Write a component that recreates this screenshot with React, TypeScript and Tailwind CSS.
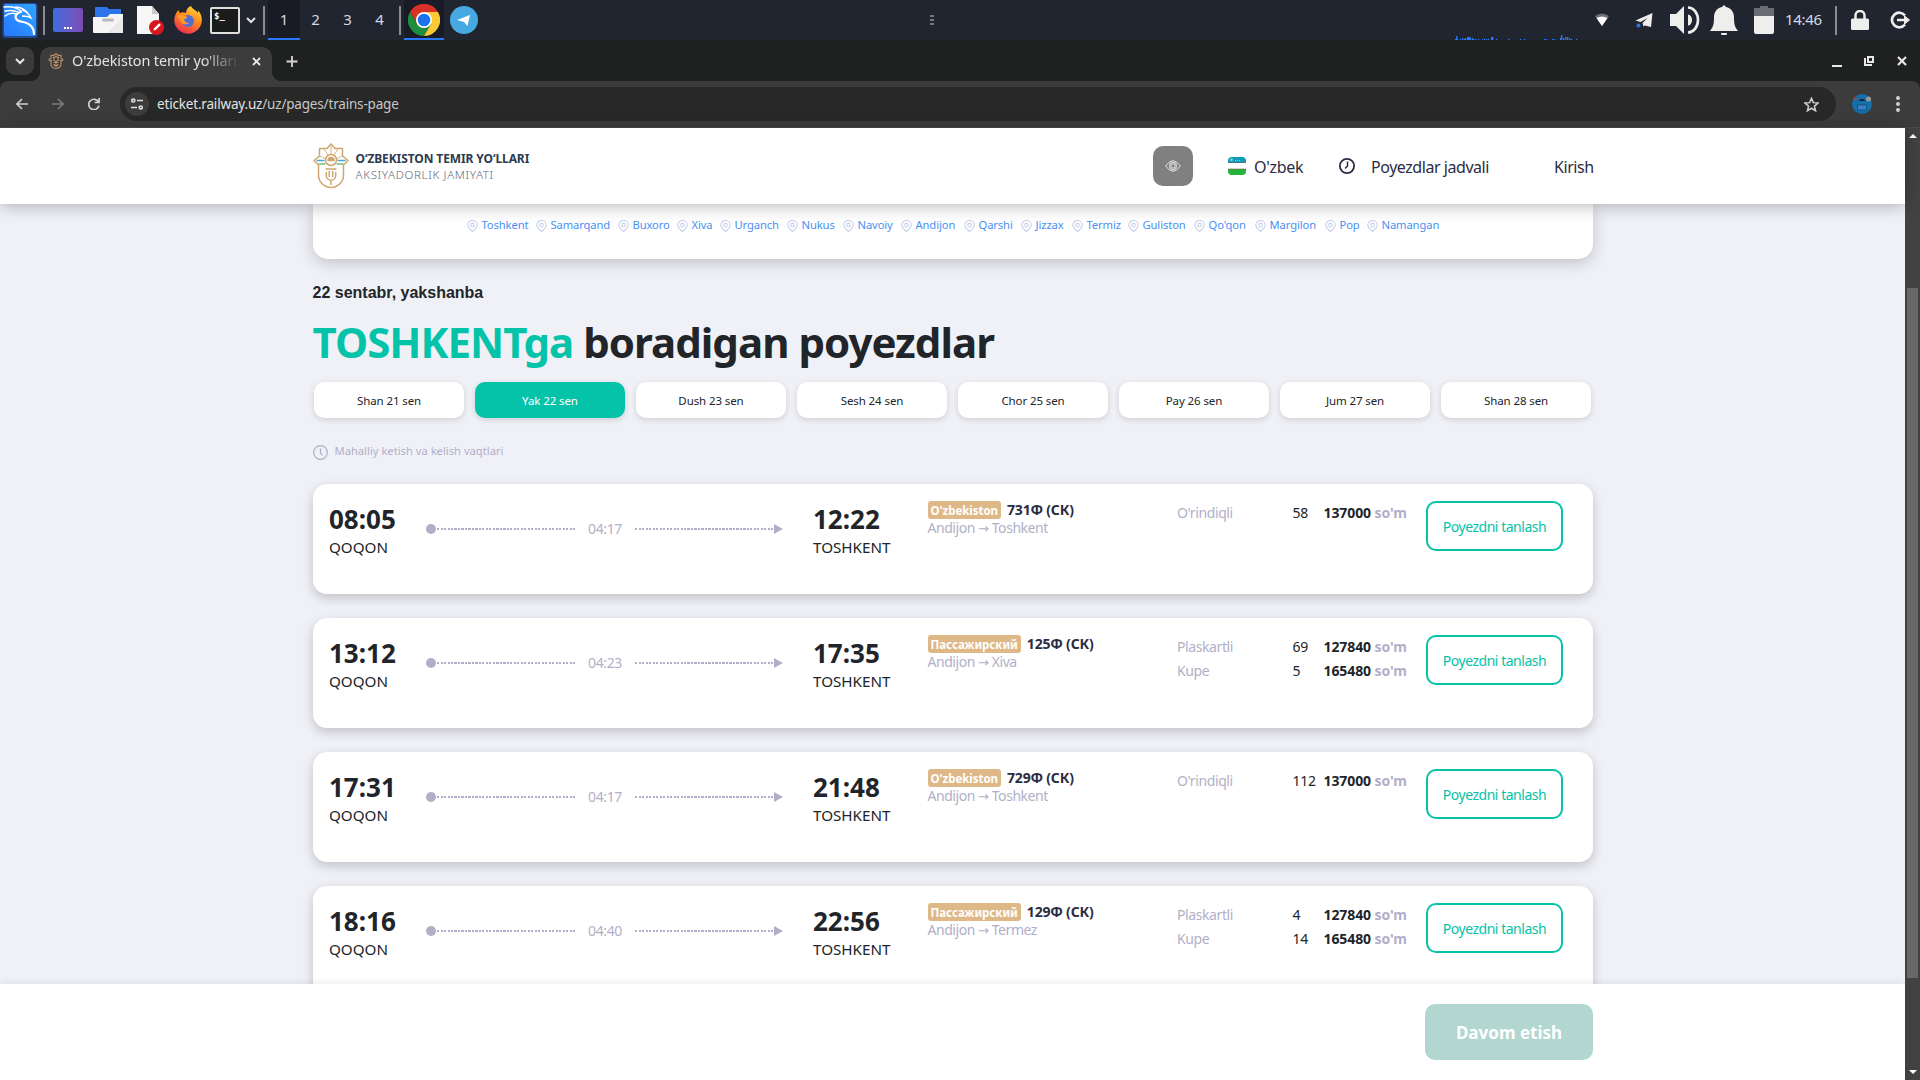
import React from 'react';

const CITIES = [
  { name: 'Toshkent', w: 'w-[69px]' },
  { name: 'Samarqand', w: 'w-[82px]' },
  { name: 'Buxoro', w: 'w-[59px]' },
  { name: 'Xiva', w: 'w-[43px]' },
  { name: 'Urganch', w: 'w-[67px]' },
  { name: 'Nukus', w: 'w-[56px]' },
  { name: 'Navoiy', w: 'w-[58px]' },
  { name: 'Andijon', w: 'w-[63px]' },
  { name: 'Qarshi', w: 'w-[57px]' },
  { name: 'Jizzax', w: 'w-[51px]' },
  { name: 'Termiz', w: 'w-[56px]' },
  { name: 'Guliston', w: 'w-[66px]' },
  { name: "Qo'qon", w: 'w-[61px]' },
  { name: 'Margilon', w: 'w-[70px]' },
  { name: 'Pop', w: 'w-[42px]' },
  { name: 'Namangan', w: 'w-[74px]' },
];

const DATES = ['Shan 21 sen', 'Yak 22 sen', 'Dush 23 sen', 'Sesh 24 sen', 'Chor 25 sen', 'Pay 26 sen', 'Jum 27 sen', 'Shan 28 sen'];

type Seat = { type: string; count: number; price: string };
type Train = { dep: string; dur: string; arr: string; brand: string; no: string; to: string; seats: Seat[] };

const TRAINS: Train[] = [
  { dep: '08:05', dur: '04:17', arr: '12:22', brand: "O'zbekiston", no: '731Ф (СК)', to: 'Toshkent', seats: [{ type: "O'rindiqli", count: 58, price: '137000' }] },
  { dep: '13:12', dur: '04:23', arr: '17:35', brand: 'Пассажирский', no: '125Ф (СК)', to: 'Xiva', seats: [{ type: 'Plaskartli', count: 69, price: '127840' }, { type: 'Kupe', count: 5, price: '165480' }] },
  { dep: '17:31', dur: '04:17', arr: '21:48', brand: "O'zbekiston", no: '729Ф (СК)', to: 'Toshkent', seats: [{ type: "O'rindiqli", count: 112, price: '137000' }] },
  { dep: '18:16', dur: '04:40', arr: '22:56', brand: 'Пассажирский', no: '129Ф (СК)', to: 'Termez', seats: [{ type: 'Plaskartli', count: 4, price: '127840' }, { type: 'Kupe', count: 14, price: '165480' }] },
];

const SPIKES = [
  [0, 1], [1, 4], [2, 1], [5, 1], [7, 2], [9, 1], [10, 2], [12, 3], [13, 3], [14, 3], [15, 2], [17, 2], [18, 1], [20, 1], [23, 1], [27, 1], [29, 1], [31, 1], [33, 1], [36, 3], [37, 3], [41, 1],
  [53, 1], [65, 1], [69, 1], [89, 1], [91, 1], [97, 1], [99, 1], [105, 2], [106, 5], [108, 2], [110, 3], [112, 3], [114, 2], [116, 1], [121, 1],
];

function KaliIcon() {
  return (
    <svg className="ml-[2px] size-9 shrink-0" viewBox="0 0 36 36" fill="none">
      <defs>
        <linearGradient id="kali" x1="0" y1="1" x2="1" y2="0">
          <stop offset="0" stopColor="#2777ff" />
          <stop offset="1" stopColor="#2fa4ff" />
        </linearGradient>
      </defs>
      <rect x="0.5" y="1" width="35" height="35" rx="3" fill="#2468d8" opacity=".55" />
      <rect x="2" y="2" width="32" height="32" rx="2" fill="url(#kali)" />
      <path d="M2 5c7-1 12 0 17 4M3 9c5-1 9-1 13 1M3 14c4-3 8-3 11-2" stroke="#fff" strokeWidth="1.500" strokeLinecap="round" />
      <path d="M13 5c6 0 11 3 14 8M20 8c4 1 7 4 9 8-3-2-6-2-9-2" stroke="#fff" strokeWidth="1.300" />
      <path d="M19 10c-5 1-7 5-4 8 4 3 10 1 14 6 2 2 3 5 3 8" stroke="#fff" strokeWidth="2.200" strokeLinecap="round" />
    </svg>
  );
}

function Chrome() {
  return (
    <svg className="size-8" viewBox="0 0 32 32">
      <path d="M2.100 8A16 16 0 0 1 29.900 8H16L9 20z" fill="#d93025" />
      <path d="M2.100 8A16 16 0 0 0 16 32l7-12H9z" fill="#1e8e3e" />
      <path d="M29.900 8A16 16 0 0 1 16 32l7-12-7-12z" fill="#fcc934" />
      <circle cx="16" cy="16" r="8" fill="#fff" />
      <circle cx="16" cy="16" r="6.300" fill="#1a73e8" />
    </svg>
  );
}

function Firefox() {
  return (
    <svg className="size-7" viewBox="0 0 28 28">
      <defs>
        <linearGradient id="fx" x1=".8" y1="0" x2=".3" y2="1">
          <stop offset="0" stopColor="#ffdf3a" />
          <stop offset=".45" stopColor="#ff8a1f" />
          <stop offset="1" stopColor="#ef2d4e" />
        </linearGradient>
      </defs>
      <path d="M17 0c1 3 5 4 7 7 0-1 0-2-.3-3C27 7 28 11 27.800 15A13.800 13.800 0 0 1 .3 15C.2 10 2 6 5 4c0 2 0 2 1 3 2-1 4-1 6 0 0-3 2-6 5-7z" fill="url(#fx)" />
      <circle cx="14" cy="15" r="6" fill="#4f6fd8" />
      <path d="M3 10c4-2 6 0 9 0 2 1 1 3-2 3 0 2 2 4 5 4-3 3-9 1-9-3z" fill="#ff9a26" />
    </svg>
  );
}

function Emblem({ className, stroke = 1.5 }: { className: string; stroke?: number }) {
  return (
    <svg className={className} viewBox="0 0 36 46" fill="none" stroke="#cfa76b" strokeWidth={stroke} strokeLinejoin="round">
      <path d="M18 1l4 4.500h7.500V13L35 17.500l-4.500 4.500V32a12.500 12.500 0 0 1-25 0V22L1 17.500 6.500 13V5.500H14z" />
      <path d="M18 3v8M11 6l4 6M25 6l-4 6M7 13l5 2.500M29 13l-5 2.500" strokeWidth=".8" />
      <path d="M3.500 17.500h8M24.500 17.500h8" stroke="#4aa3d8" strokeWidth="1.500" />
      <path d="M5.500 21h7M23.500 21h7" stroke="#6fbf73" strokeWidth="1.300" />
      <circle cx="18" cy="17" r="5.500" />
      <path d="M15 17.500a3 3 0 0 1 6 0z" fill="#cfa76b" />
      <path d="M12.500 26h11M13.300 29v3.500a4.700 4.700 0 0 0 9.400 0V29M18 37v5M16.300 28v6M19.700 28v6" />
    </svg>
  );
}

function TabIcon() {
  return (
    <svg className="ml-2 size-4" viewBox="0 0 16 16" fill="none" stroke="#b58a63" strokeWidth="1.200">
      <path d="M8 .7l2 1.600h3v3l2 1.500-2 1.700v2.700a5 4.300 0 0 1-10 0V8.500L1 6.800l2-1.500v-3h3z" />
      <circle cx="8" cy="6" r="2.300" />
      <path d="M5.500 9.500h5M6 11a2 2 0 0 0 4 0M8 10v4M5 4l1 1M11 4l-1 1" />
      <path d="M2.500 7.500h2M11.500 7.500h2" stroke="#7f9c86" />
    </svg>
  );
}

function Divider({ className = '' }: { className?: string }) {
  return <div className={'h-[29px] w-[2px] shrink-0 bg-[#8b8d92] ' + className} />;
}

function DesktopBar() {
  return (
    <div className="relative flex h-10 items-center bg-[#212530] text-[15px] text-[#d3dae3]">
      <KaliIcon />
      <Divider className="ml-[5px]" />
      <div className="ml-2 flex h-6 w-[30px] items-end justify-center gap-[1px] rounded-[2px] bg-linear-to-r from-[#3b6ce0] to-[#7b4bb5] pb-[3px]">
        <i className="size-[2px] bg-white" /><i className="size-[2px] bg-white" /><i className="size-[2px] bg-white" />
      </div>
      <svg className="ml-[10px] h-7 w-[30px]" viewBox="0 0 30 28">
        <path d="M2 2a1 1 0 0 1 1-1h11l2 2h12v9H2z" fill="#2f73e8" />
        <path d="M0 11h14l3-3h13v18a1 1 0 0 1-1 1H1a1 1 0 0 1-1-1z" fill="#f5f5f5" />
        <path d="M14 27L30 11v16z" fill="#e9e9e9" />
        <rect x="9" y="12.500" width="12" height="3" rx="1.500" fill="#b9b9b9" />
      </svg>
      <svg className="ml-[14px] h-[29px] w-7" viewBox="0 0 28 29">
        <path d="M0 0h15l7 8v20H0z" fill="#f6f6f6" />
        <path d="M15 0l7 8h-7z" fill="#c9c9c9" />
        <circle cx="19.500" cy="21.500" r="7.500" fill="#d8171e" />
        <path d="M16.500 24.500l.6-2.300 5-5 1.700 1.700-5 5z" fill="#fff" />
      </svg>
      <div className="ml-[9px]"><Firefox /></div>
      <div className="ml-2 h-[27px] w-[30px] rounded-[2px] border-2 border-[#dfdfdc] bg-[#1a1c1b] pl-[2px] font-['DejaVu_Sans_Mono'] text-[9px] leading-[14px] font-bold text-white">$_</div>
      <svg className="ml-[6px] size-[10px]" viewBox="0 0 10 10" fill="none" stroke="#e0e0e0" strokeWidth="2"><path d="M1 3l4 4 4-4" /></svg>
      <Divider className="ml-[7px]" />
      <div className="ml-[3px] flex h-10 w-8 items-center justify-center border-b-2 border-[#2777ff] bg-[#191c26]">1</div>
      <div className="w-8 pr-px pb-px text-center">2</div>
      <div className="w-8 pr-px pb-px text-center">3</div>
      <div className="w-8 pr-px pb-px text-center">4</div>
      <Divider className="ml-[3px]" />
      <div className="ml-[3px] flex h-10 w-10 items-center justify-center border-b-2 border-[#2777ff] bg-[#191c26] pt-[2px]"><Chrome /></div>
      <svg className="ml-[6px] size-7" viewBox="0 0 28 28"><circle cx="14" cy="14" r="14" fill="#46a9e2" /><path d="M7 14l13-5-2.500 11-3.500-4z" fill="#fff" /></svg>
      <div className="ml-[452px] flex flex-col gap-[2px]">
        <i className="h-[2px] w-1 bg-[#747680]" /><i className="h-[2px] w-1 bg-[#747680]" /><i className="h-[2px] w-1 bg-[#747680]" />
      </div>
      <div className="mr-[8px] ml-auto flex items-center text-[#eeeeec]">
        <svg className="h-[14px] w-4" viewBox="0 0 16 14"><path d="M1 3q7-5 14 0l-7 10z" fill="#6c6e75" /><path d="M2.500 5q5.500-3 11 0L8 13z" fill="#fff" /></svg>
        <svg className="ml-6 h-4 w-5" viewBox="0 0 20 16"><path d="M1.500 8.500L18.500 1 17 15l-6-1.500-1.500 1-1-3.500 5-5-7 4z" fill="#eeeeec" /><circle cx="4.500" cy="13.500" r="2" fill="#2f73e8" /></svg>
        <svg className="ml-4 h-7 w-[30px]" viewBox="0 0 30 28" fill="none">
          <path d="M0 8h6l8-8v28l-8-8H0z" fill="#eeeeec" />
          <path d="M18 8.500a4 5.500 0 0 1 0 11z" fill="#eeeeec" />
          <path d="M18 1.500a10 12.500 0 0 1 0 25" stroke="#eeeeec" strokeWidth="2.600" />
        </svg>
        <svg className="ml-[10px] h-[30px] w-7" viewBox="0 0 28 30" fill="#eeeeec"><path d="M14 0l2 2c5 1 8 5 8 10 0 8 1 10 4 14H0c3-4 4-6 4-14 0-5 3-9 8-10zM11 28h6a3 3 0 0 1-6 0z" /></svg>
        <svg className="ml-4 h-7 w-5" viewBox="0 0 20 28"><path d="M6 0h8v2h6v8H0V2h6z" fill="#6a6c73" /><path d="M0 10h20v16a2 2 0 0 1-2 2H2a2 2 0 0 1-2-2z" fill="#eeeeec" /></svg>
        <span className="ml-[11px] w-[38px] pb-px text-[15px] tracking-[-0.3px] whitespace-nowrap text-[#d3dae3]">14:46</span>
        <Divider className="ml-3" />
        <svg className="ml-[14px] h-5 w-[18px]" viewBox="0 0 18 20"><path d="M4.500 9V5.500a4.500 4.500 0 0 1 9 0V9" fill="none" stroke="#eeeeec" strokeWidth="2.500" /><rect y="8.500" width="18" height="11.500" rx="1.500" fill="#eeeeec" /></svg>
        <svg className="ml-[21px] h-[18px] w-[22px]" viewBox="0 0 22 18" fill="none" stroke="#eeeeec" strokeWidth="2.700"><path d="M15 4.500A7.300 7.300 0 1 0 15 13.500M7 9h9" /><path d="M14.500 5l5 4-5 4z" fill="#eeeeec" strokeWidth="1" /></svg>
      </div>
      <svg className="absolute bottom-0 left-[1455px] h-[5px] w-[124px]" viewBox="0 0 124 5" fill="#2777ff">
        {SPIKES.map(([x, h]) => <rect key={x} x={x} y={5 - h} width="1.300" height={h} />)}
      </svg>
    </div>
  );
}

function TabStrip() {
  return (
    <div className="flex h-[41px] bg-[#1f2120] pt-[7px] text-[#e3e3e3]">
      <div className="ml-[6px] flex size-7 items-center justify-center rounded-[9px] bg-[#3a3b3a]">
        <svg className="size-[10px]" viewBox="0 0 10 10" fill="none" stroke="#e8e8e8" strokeWidth="2"><path d="M1 3l4 4 4-4" /></svg>
      </div>
      <div className="relative ml-[6px] flex h-[34px] w-[232px] items-center rounded-t-[10px] bg-[#3c3c3c] pb-[6px]">
        <i className="absolute bottom-0 -left-[10px] size-[10px] bg-[radial-gradient(circle_at_0_0,transparent_10px,#3c3c3c_10.5px)]" />
        <i className="absolute -right-[10px] bottom-0 size-[10px] bg-[radial-gradient(circle_at_100%_0,transparent_10px,#3c3c3c_10.5px)]" />
        <TabIcon />
        <span className="ml-2 w-[168px] mask-r-from-78% mask-r-to-100% text-[14.4px] leading-5 tracking-[-0.1px] whitespace-nowrap">O'zbekiston temir yo'llari</span>
        <svg className="ml-3 size-[9px]" viewBox="0 0 9 9" stroke="#e8e8e8" strokeWidth="1.800"><path d="M1 1l7 7M8 1L1 8" /></svg>
      </div>
      <svg className="mt-2 ml-[14px] size-3" viewBox="0 0 12 12" stroke="#d5d5d5" strokeWidth="1.800"><path d="M6 1v11M.5 6.500h11" /></svg>
      <div className="mr-[13px] ml-auto flex h-7 items-center">
        <i className="mt-[9px] h-[2px] w-[10px] bg-[#e8e8e8]" />
        <svg className="ml-[22px] size-[10px]" viewBox="0 0 10 10" fill="none" stroke="#e8e8e8" strokeWidth="2"><path d="M4 1h5v5H4zM1 2v7h7" /></svg>
        <svg className="ml-[23px] size-[10px]" viewBox="0 0 10 10" stroke="#e8e8e8" strokeWidth="2.200"><path d="M1 1l8 8M9 1L1 9" /></svg>
      </div>
    </div>
  );
}

function Toolbar() {
  return (
    <div className="bg-[#1f2120]">
      <div className="flex h-[47px] items-center rounded-t-[8px] border-b border-[#4a4a4a] bg-[#3c3c3c]">
        <svg className="ml-4 size-3" viewBox="0 0 12 12" fill="none" stroke="#d0d0d0" strokeWidth="1.700"><path d="M12 6H1M6 1L1 6l5 5" /></svg>
        <svg className="ml-6 size-3" viewBox="0 0 12 12" fill="none" stroke="#7b7b7b" strokeWidth="1.700"><path d="M0 6h11M6 1l5 5-5 5" /></svg>
        <svg className="ml-6 size-3" viewBox="0 0 12 12" fill="none" stroke="#d0d0d0" strokeWidth="1.700"><path d="M10.500 4A5.200 5.200 0 1 0 11 7.500M11.100 0v4.500H6.600" /></svg>
        <div className="ml-5 flex h-[34px] w-[1716px] items-center rounded-full bg-[#282828]">
          <div className="ml-[5px] flex size-6 items-center justify-center rounded-full bg-[#3c3c3c]">
            <svg className="size-3" viewBox="0 0 12 12" fill="none" stroke="#dedede" strokeWidth="1.700"><circle cx="2.300" cy="2.500" r="1.500" /><circle cx="9.700" cy="9.500" r="1.500" /><path d="M6 2.500h6M0 9.500h6" /></svg>
          </div>
          <span className="ml-2 w-[243px] text-[13.5px] tracking-[-0.18px] whitespace-nowrap text-[#c7c7c7]"><span className="text-[#e3e3e3]">eticket.railway.uz</span>/uz/pages/trains-page</span>
          <svg className="mr-[17px] ml-auto size-[15px]" viewBox="0 0 24 24" fill="none" stroke="#d0d0d0" strokeWidth="2.400"><path d="M12 2l2.900 7 7.600.6-5.800 5 1.800 7.400-6.500-4-6.500 4 1.800-7.400-5.800-5 7.600-.6z" /></svg>
        </div>
        <svg className="ml-4 size-5" viewBox="0 0 20 20"><circle cx="10" cy="10" r="10" fill="#156fa8" /><path d="M1 5h6l-5-2z" fill="#b33" /><circle cx="16.500" cy="5" r="2.500" fill="#9a9a94" /><path d="M7 7a3 2 0 0 1 6 0z" fill="#15202a" /><rect x="5.500" y="11" width="9" height="5" fill="#3b82c4" stroke="#0d4f80" strokeWidth=".8" /></svg>
        <div className="ml-6 flex flex-col gap-[2.500px]"><i className="size-[3.500px] rounded-full bg-[#d0d0d0]" /><i className="size-[3.500px] rounded-full bg-[#d0d0d0]" /><i className="size-[3.500px] rounded-full bg-[#d0d0d0]" /></div>
      </div>
    </div>
  );
}

function SiteHeader() {
  return (
    <header className="relative z-10 flex h-[76px] shrink-0 items-center bg-white pl-[312.5px] text-[16px] tracking-[-0.45px] text-[#2c2c44] shadow-[0_2px_16px_rgba(0,0,0,0.28)]">
      <Emblem className="h-[46px] w-9" />
      <div className="ml-[7px] w-[300px] pt-[2px] whitespace-nowrap">
        <div className="text-[12px] leading-4 font-bold tracking-[-0.1px] text-[#2d3a4f]">O‘ZBEKISTON TEMIR YO‘LLARI</div>
        <div className="text-[11.500px] leading-4 font-light tracking-[0.68px] text-[#5d6778]">AKSIYADORLIK JAMIYATI</div>
      </div>
      <div className="ml-[497.5px] flex size-10 items-center justify-center rounded-[10px] bg-[#808080]">
        <svg className="h-3 w-4" viewBox="0 0 16 12" fill="none" stroke="#fff" strokeWidth=".8"><path d="M.6 6Q8-4.500 15.400 6 8 16.500.6 6z" /><rect x="4.500" y="2.500" width="7" height="7" rx="3" /><rect x="6" y="4" width="4" height="4" rx="1" /></svg>
      </div>
      <svg className="ml-[35px] size-[18px]" viewBox="0 0 18 18">
        <clipPath id="flag"><rect width="18" height="18" rx="4" /></clipPath>
        <g clipPath="url(#flag)"><rect width="18" height="6" fill="#0e9bb8" /><rect y="5.500" width="18" height=".6" fill="#8b5660" /><rect y="6" width="18" height="6" fill="#fff" /><rect y="12" width="18" height="6" fill="#22b33a" /><rect y="11.700" width="18" height=".6" fill="#8b5660" /><circle cx="3.500" cy="2.800" r="1.400" fill="#7fd0de" /><path d="M7 3.500h6" stroke="#7fd0de" strokeDasharray="1 1" /></g>
      </svg>
      <span className="ml-2 w-[85px] pt-px tracking-[-0.3px] whitespace-nowrap">O'zbek</span>
      <svg className="size-4" viewBox="0 0 16 16" fill="none" stroke="#2c2c44" strokeWidth="1.800"><circle cx="8" cy="8" r="7.100" /><path d="M8.500 3.500V8l-2.500 2.500" strokeWidth="1.500" /></svg>
      <span className="ml-4 w-[183px] pt-px whitespace-nowrap">Poyezdlar jadvali</span>
      <span className="pt-px">Kirish</span>
    </header>
  );
}

function Pin() {
  return (
    <svg className="h-3 w-[11px] shrink-0" viewBox="0 0 11 12" fill="none" stroke="#c9d0ec" strokeWidth="1.100"><path d="M5.500 11.500C3 9.500.8 7.500.8 5a4.700 4.500 0 0 1 9.400 0c0 2.500-2.200 4.500-4.700 6.500z" /><circle cx="5.500" cy="5.200" r="1.800" /></svg>
  );
}

function TrainCard({ t }: { t: Train }) {
  return (
    <div className="flex h-[110px] w-[1280px] shrink-0 rounded-[14px] bg-white shadow-[0_4px_12px_rgba(0,0,0,0.2)]">
      <div className="ml-4 w-[97px] pt-[16px] text-[#212529]">
        <div className="text-[26px] leading-[38px] font-bold">{t.dep}</div>
        <div className="text-[15.2px] leading-[18px]">QOQON</div>
      </div>
      <div className="mt-[38px] flex h-[14px] items-center text-[#b1afc8]">
        <i className="size-[10px] rounded-full bg-[#b1afc8]" />
        <i className="ml-px h-[2px] w-[138px] bg-[repeating-linear-gradient(90deg,#b1afc8_0_2px,transparent_2px_3.5px)]" />
        <span className="w-[60px] text-center text-[14px] leading-[14px] tracking-[-0.4px]">{t.dur}</span>
        <i className="h-[2px] w-[139px] bg-[repeating-linear-gradient(90deg,#b1afc8_0_2px,transparent_2px_3.5px)]" />
        <svg className="h-[10px] w-[9px]" viewBox="0 0 9 10" fill="#b1afc8"><path d="M0 0l9 5-9 5z" /></svg>
      </div>
      <div className="ml-[30px] w-[114.5px] pt-[16px] text-[#212529]">
        <div className="text-[26px] leading-[38px] font-bold">{t.arr}</div>
        <div className="text-[15.2px] leading-[18px]">TOSHKENT</div>
      </div>
      <div className="w-[249.5px] pt-[17px] whitespace-nowrap">
        <div className="flex h-[18px] items-center">
          <span className="h-[18px] rounded-[3px] bg-[#deb887] px-[3px] text-[11.500px] leading-[20px] font-bold tracking-[-0.04px] text-white">{t.brand}</span>
          <span className="ml-[6px] pb-px text-[14px] font-bold tracking-[-0.2px] text-[#2c2c44]">{t.no}</span>
        </div>
        <div className="text-[14px] leading-[17px] tracking-[-0.45px] text-[#b1afc8]">Andijon <span className="font-['DejaVu_Sans'] text-[13px] leading-none">→</span> {t.to}</div>
      </div>
      <div className="w-[249px] pt-[17px] text-[14px] leading-6 whitespace-nowrap text-[#212529]">
        {t.seats.map((s) => (
          <div key={s.type} className="flex">
            <span className="w-[115.5px] tracking-[-0.4px] text-[#b1afc8]">{s.type}</span>
            <span className="w-[31px] tracking-[-0.2px]">{s.count}</span>
            <span className="font-bold tracking-[-0.1px]">{s.price} <span className="text-[#b1afc8]">so'm</span></span>
          </div>
        ))}
      </div>
      <button className="mt-[17px] h-[50px] w-[137px] rounded-[10px] border-2 border-[#05c3a9] pt-px text-[14px] tracking-[-0.48px] whitespace-nowrap text-[#05c3a9]">Poyezdni tanlash</button>
    </div>
  );
}

export default function App() {
  return (
    <div className="h-[1080px] w-[1920px] overflow-hidden bg-[#f0f1f7] font-['Noto_Sans',sans-serif]">
      <DesktopBar />
      <TabStrip />
      <Toolbar />
      <div className="flex h-[952px]">
        <div className="flex w-[1905px] flex-col">
          <SiteHeader />
          <main className="flex min-h-0 flex-1 flex-col overflow-hidden pl-[313px]">
            <div className="flex h-[55px] w-[1280px] shrink-0 rounded-b-[15px] bg-white pt-[12px] pl-[153.5px] shadow-[0_4px_16px_rgba(0,0,0,0.2)]">
              {CITIES.map((c) => (
                <span key={c.name} className={'flex h-[19px] items-center gap-1 text-[11.2px] tracking-[-0.1px] whitespace-nowrap text-[#4a90f4] ' + c.w}>
                  <Pin />
                  {c.name}
                </span>
              ))}
            </div>
            <div className="mt-[22px] h-6 shrink-0 -ml-[0.5px] font-['Liberation_Sans'] text-[16px] leading-6 font-bold text-[#212529]">22 sentabr, yakshanba</div>
            <h1 className="mt-[7px] -ml-[0.5px] h-[60px] shrink-0 text-[42px] leading-[60px] font-bold tracking-[-0.97px] whitespace-nowrap text-[#212529]"><span className="text-[#05c3a9]">TOSHKENTga</span> boradigan poyezdlar</h1>
            <div className="mt-[10px] ml-px flex shrink-0 gap-[11px]">
              {DATES.map((d, i) => (
                <div key={d} className={'flex h-9 w-[150px] items-center justify-center rounded-[10px] pt-[2px] text-[11.500px] tracking-[-0.1px] shadow-[0_2px_6px_rgba(0,0,0,0.14)] ' + (i === 1 ? 'bg-[#05c3a9] text-white' : 'bg-white text-[#212529]')}>{d}</div>
              ))}
            </div>
            <div className="mt-6 flex h-[18px] shrink-0 items-center text-[11.2px] text-[#b1afc8]">
              <svg className="mt-[2px] mr-[7px] -ml-[0.5px] size-[15px]" viewBox="0 0 15 15" fill="none" stroke="#b1afc8" strokeWidth="1.200"><circle cx="7.500" cy="7.500" r="6.800" /><path d="M7.500 3.500v4.500l2 2.500" /></svg>
              Mahalliy ketish va kelish vaqtlari
            </div>
            <div className="mt-6 flex flex-col gap-6">
              {TRAINS.map((t) => <TrainCard key={t.dep} t={t} />)}
            </div>
          </main>
          <footer className="relative flex h-24 shrink-0 items-start justify-end bg-white pt-5 pr-[312px] shadow-[0_0_8px_rgba(0,0,0,0.1)]">
            <button className="h-14 w-[168px] rounded-[10px] bg-[#b1d7d0] pt-[2px] text-[17px] font-bold text-white">Davom etish</button>
          </footer>
        </div>
        <div className="flex w-[15px] flex-col items-center bg-[#424242]">
          <svg className="mt-[6px] h-1 w-2" viewBox="0 0 8 4" fill="#fff"><path d="M4 0l4 4H0z" /></svg>
          <div className="mt-[150px] h-[690px] w-[11px] bg-[#686868]" />
          <svg className="mt-auto mb-[6px] h-1 w-2" viewBox="0 0 8 4" fill="#fff"><path d="M4 4l4-4H0z" /></svg>
        </div>
      </div>
    </div>
  );
}
